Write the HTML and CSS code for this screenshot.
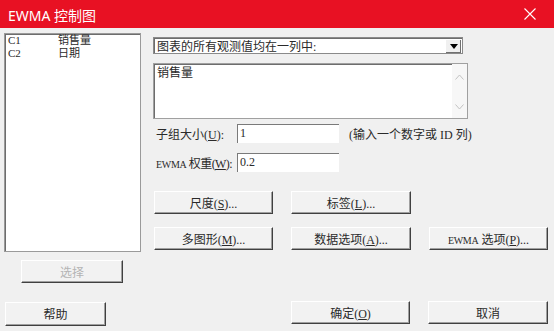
FILE: index.html
```html
<!DOCTYPE html>
<html lang="zh-CN">
<head>
    <meta charset="UTF-8">
    <meta name="viewport" content="width=device-width, initial-scale=1.0">
    <title>EWMA 控制图</title>
    <link rel="stylesheet" href="styles.css">
</head>
<body>

<div class="titlebar">
    <span class="title">EWMA 控制图</span>
    <svg class="close" width="12" height="12" viewBox="0 0 12 12">
        <path d="M0.5 0.5 L11.5 11.5 M11.5 0.5 L0.5 11.5" stroke="#fff" stroke-width="1.1" fill="none"/>
    </svg>
</div>

<div class="main">
    <div class="left-col">
        <div class="listbox">
            <div class="list-row"><span class="col-id">C1</span><span>销售量</span></div>
            <div class="list-row"><span class="col-id">C2</span><span>日期</span></div>
        </div>
        <button class="btn btn-select" disabled>选择</button>
    </div>

    <div class="right-col">
        <div class="dropdown">
            <span class="dropdown-text">图表的所有观测值均在一列中:</span>
            <span class="dropdown-arrow">
                <svg width="8" height="5" viewBox="0 0 8 5"><path d="M0 0 H8 L4 5 Z" fill="#000"/></svg>
            </span>
        </div>

        <div class="textbox">
            <div class="textbox-text">销售量</div>
            <div class="scrollbar">
                <svg width="9" height="6" viewBox="0 0 9 6"><path d="M0.5 5.5 L4.5 1 L8.5 5.5" stroke="#c3c3c3" fill="none"/></svg>
                <svg width="9" height="6" viewBox="0 0 9 6"><path d="M0.5 0.5 L4.5 5 L8.5 0.5" stroke="#c3c3c3" fill="none"/></svg>
            </div>
        </div>

        <div class="field-row first">
            <span class="field-label">子组大小(<u>U</u>):</span>
            <span class="field-input">1</span>
            <span class="field-hint">(输入一个数字或 ID 列)</span>
        </div>
        <div class="field-row">
            <span class="field-label tight"><span class="small-caps">EWMA</span> 权重(<u>W</u>):</span>
            <span class="field-input">0.2</span>
        </div>

        <div class="btn-grid">
            <button class="btn">尺度(<u>S</u>)...</button>
            <button class="btn">标签(<u>L</u>)...</button>
            <span></span>
            <button class="btn">多图形(<u>M</u>)...</button>
            <button class="btn">数据选项(<u>A</u>)...</button>
            <button class="btn"><span class="small-caps">EWMA</span> 选项(<u>P</u>)...</button>
        </div>
    </div>
</div>

<div class="footer">
    <button class="btn btn-help">帮助</button>
    <button class="btn btn-ok">确定(<u>O</u>)</button>
    <button class="btn btn-cancel">取消</button>
</div>

</body>
</html>
```

FILE: styles.css
```css
body {
    margin: 0;
    width: 554px;
    height: 331px;
    overflow: hidden;
    background-color: #f0f0f0;
    color: #2a2a2a;
    font-family: "Liberation Serif", "Noto Sans CJK SC", serif;
    font-size: 12px;
}
.titlebar {
    height: 28px;
    background-color: #e81123;
    display: flex;
    align-items: center;
    padding: 0 18px 0 8px;
}
.title {
    color: #fff;
    font-family: "Noto Sans", "Noto Sans CJK SC", sans-serif;
    font-size: 14px;
    flex-grow: 1;
    padding-top: 1px;
}
.main {
    display: flex;
    padding: 5px 0 0 4px;
}
.left-col {
    width: 137px;
}
.listbox {
    height: 219px;
    box-sizing: border-box;
    background-color: #fff;
    border: 1px solid #9a9a9a;
    box-shadow: inset 1px 1px 0 #6d6d6d;
    padding: 0 3px;
    font-size: 11px;
    line-height: 13px;
}
.list-row {
    display: flex;
}
.col-id {
    width: 50px;
}
.right-col {
    margin-left: 12px;
    padding-top: 4px;
}
.dropdown {
    width: 310px;
    height: 17px;
    box-sizing: border-box;
    background-color: #fff;
    border: 1px solid #8a8a8a;
    box-shadow: inset 1px 1px 0 #6d6d6d;
    display: flex;
    align-items: center;
    padding: 0 1px 0 3px;
}
.dropdown-text {
    flex-grow: 1;
}
.dropdown-arrow {
    width: 15px;
    height: 13px;
    background-color: #f0f0f0;
    border-left: 1px solid #fff;
    border-top: 1px solid #fff;
    box-shadow: inset -1px -1px 0 #707070;
    display: flex;
    align-items: center;
    justify-content: center;
}
.textbox {
    width: 315px;
    height: 56px;
    margin-top: 9px;
    box-sizing: border-box;
    background-color: #fff;
    border: 1px solid #a0a0a0;
    box-shadow: inset 1px 1px 0 #6d6d6d;
    display: flex;
}
.textbox-text {
    flex-grow: 1;
    padding: 3px 0 0 3px;
    line-height: 12px;
}
.scrollbar {
    width: 15px;
    background-color: #f7f7f7;
    display: flex;
    flex-direction: column;
    justify-content: space-between;
    align-items: center;
    padding: 10px 0 8px;
}
.field-row {
    display: flex;
    align-items: center;
    margin-top: 10px;
}
.field-row.first {
    margin-top: 5px;
}
.field-label {
    width: 84px;
    flex-shrink: 0;
    box-sizing: border-box;
    padding-left: 3px;
    white-space: nowrap;
}
.field-label.tight {
    letter-spacing: -0.6px;
}
.small-caps {
    font-size: 10px;
    letter-spacing: -0.3px;
}
.field-input {
    width: 102px;
    height: 19px;
    box-sizing: border-box;
    background-color: #fff;
    border-top: 1px solid #7a7a7a;
    border-left: 1px solid #7a7a7a;
    padding: 1px 0 0 2px;
    line-height: 14px;
}
.field-hint {
    margin-left: 10px;
}
.btn-grid {
    display: grid;
    grid-template-columns: 119px 120px 119px;
    grid-auto-rows: 23px;
    column-gap: 18px;
    row-gap: 13px;
    margin: 19px 0 0 1px;
}
.btn {
    font: inherit;
    color: #2a2a2a;
    background-color: #f2f2f2;
    border: none;
    border-top: 1px solid #fff;
    border-left: 1px solid #fff;
    border-right: 1px solid #404040;
    border-bottom: 1px solid #404040;
    box-shadow: inset -1px -1px 0 #a0a0a0;
    padding: 0;
    height: 23px;
    white-space: nowrap;
}
.btn-select {
    width: 102px;
    margin: 8px 0 0 17px;
    color: #b4b4b4;
}
.footer {
    display: flex;
    align-items: flex-start;
    margin-top: 18px;
    padding-left: 5px;
}
.btn-help {
    width: 101px;
    height: 24px;
    margin-top: 1px;
}
.btn-ok {
    width: 119px;
    margin-left: 185px;
}
.btn-cancel {
    width: 120px;
    margin-left: 18px;
}
```
